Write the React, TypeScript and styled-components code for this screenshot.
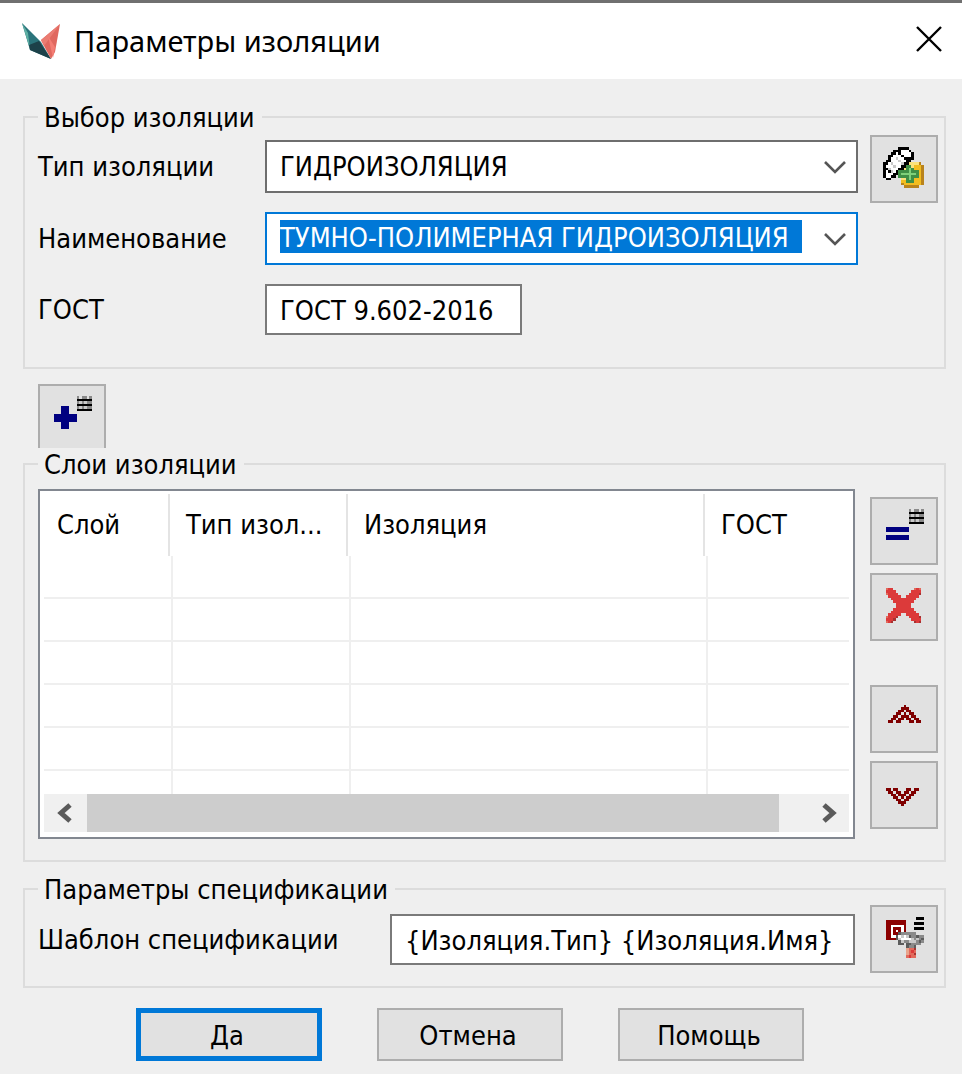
import React, { useState } from 'react';
import styled, { createGlobalStyle } from 'styled-components';

const GlobalStyle = createGlobalStyle`
  *, *::before, *::after { box-sizing: border-box; }
  body {
    margin: 0;
    background: #efefef;
    color: #000;
    font: 27px/32px "DejaVu Sans Condensed", "Noto Sans", sans-serif;
  }
  button, input, select { font: inherit; color: inherit; margin: 0; border-radius: 0; }
`;

const Dialog = styled.form`
  width: 100%;
  background: #efefef;
  border-top: 3px solid #707070;
  padding-bottom: 13px;
`;

const TitleBar = styled.header`
  display: flex;
  align-items: center;
  height: 76px;
  padding: 0 20px 0 22px;
  background: #fff;
`;

const Title = styled.h1`
  flex: 1;
  margin: 0 0 0 14px;
  font: 400 29px/40px "Noto Sans", sans-serif;
`;

const CloseButton = styled.button`
  display: flex;
  padding: 0;
  margin-bottom: 4px;
  border: 0;
  background: transparent;
`;

const Content = styled.main`
  display: flex;
  flex-direction: column;
  padding: 22px 16px 0 23px;
`;

const Group = styled.fieldset<{ $bottom: number }>`
  min-width: 0;
  margin: 0;
  padding: 0 6px ${p => p.$bottom}px 13px;
  border: 2px solid #dcdcdc;
`;

const Legend = styled.legend`
  position: relative;
  padding: 2px 7px 0 6px;
  line-height: 30px;
  background: #efefef;
`;

const Columns = styled.div<{ $gap: number; $top: number }>`
  display: flex;
  align-items: flex-start;
  gap: ${p => p.$gap}px;
  padding-top: ${p => p.$top}px;
`;

const Fields = styled.div<{ $top: number }>`
  flex: 1;
  min-width: 0;
  display: flex;
  flex-direction: column;
  gap: 19px;
  padding-top: ${p => p.$top}px;
`;

const FieldRow = styled.div<{ $label: number }>`
  display: grid;
  grid-template-columns: ${p => p.$label}px minmax(0, 1fr);
  align-items: center;
`;

const Label = styled.label`
  white-space: nowrap;
`;

const SelectBox = styled.div<{ $active?: boolean }>`
  position: relative;
  height: 53px;
  border: 2px solid ${p => (p.$active ? '#0078d7' : '#6e6e6e')};
  background: #fff;
`;

const Select = styled.select`
  appearance: none;
  display: block;
  width: 100%;
  height: 100%;
  padding: 0 56px 0 13px;
  border: 0;
  outline: 0;
  background: transparent;
`;

const ComboInput = styled.input`
  display: block;
  width: calc(100% - 67px);
  height: 33px;
  margin: 6px 0 0 13px;
  padding: 2px 0 0;
  border: 0;
  outline: 0;
  background: #0078d7;
  color: #fff;
`;

const Arrow = styled.svg`
  position: absolute;
  right: 10px;
  top: 19px;
  pointer-events: none;
`;

const TextInput = styled.input<{ $width?: number }>`
  width: ${p => (p.$width ? `${p.$width}px` : '100%')};
  height: 51px;
  padding: 1px 13px 0;
  border: 2px solid #7a7a7a;
  outline: 0;
  background: #fff;
`;

const ToolButton = styled.button`
  flex: none;
  display: flex;
  align-items: center;
  justify-content: center;
  width: 68px;
  height: 68px;
  padding: 0 2px 4px 0;
  border: 2px solid #adadad;
  background: #e1e1e1;
`;

const AddRow = styled.div`
  display: flex;
  margin: 15px 0 -4px;
  padding-left: 15px;
`;

const ToolColumn = styled.div`
  display: flex;
  flex-direction: column;
  gap: 44px;
  padding-top: 8px;
`;

const ToolPair = styled.div`
  display: flex;
  flex-direction: column;
  gap: 8px;
`;

const ListView = styled.div`
  flex: 1;
  min-width: 0;
  padding: 3px 4px 5px;
  border: 2px solid #828790;
  background: #fff;
`;

const TableClip = styled.div`
  height: 300px;
  overflow: hidden;
`;

const Table = styled.table`
  width: 100%;
  table-layout: fixed;
  border-collapse: separate;
  border-spacing: 0;
`;

const HeadCell = styled.th`
  height: 62px;
  padding: 0 15px 0 13px;
  font-weight: 400;
  text-align: left;
  white-space: nowrap;
  overflow: hidden;
  background: linear-gradient(#e4e4e4, #e4e4e4) right 3px top / 2px 100% no-repeat;
  &:last-child { background: none; }
`;

const Cell = styled.td`
  height: 43px;
  padding: 0;
  border: solid #efefef;
  border-width: 0 2px 2px 0;
  &:last-child { border-right: 0; }
`;

const ScrollBar = styled.div`
  display: flex;
  align-items: stretch;
  height: 38px;
  background: #f0f0f0;
`;

const ScrollButton = styled.button`
  display: flex;
  align-items: center;
  justify-content: center;
  width: 43px;
  padding: 0;
  border: 0;
  background: transparent;
`;

const Track = styled.div`
  flex: 1;
  padding-right: 27px;
`;

const Thumb = styled.div`
  height: 100%;
  background: #cdcdcd;
`;

const SpecSection = styled.section`
  padding-top: 11px;
`;

const Actions = styled.footer`
  display: flex;
  justify-content: center;
  gap: 55px;
  padding: 20px 22px 0 0;
`;

const ActionButton = styled.button<{ $primary?: boolean }>`
  width: 186px;
  height: 53px;
  padding: 2px 4px 0 0;
  border: ${p => (p.$primary ? '5px solid #0078d7' : '2px solid #adadad')};
  background: #e1e1e1;
`;

const palette: Record<string, string> = {
  k: '#000000', w: '#ffffff', n: '#000080', r: '#800000', g: '#8a8a8a', s: '#c9c9c9',
  d: '#5c5c5c', e: '#3f8f45', l: '#7fd07a', y: '#f2bd1f', Y: '#fbe27a', o: '#b9831c',
  R: '#dc3a3a', P: '#e26a5c', D: '#a63232', M: '#8c0000', O: '#e9a48c',
};

function PixelIcon({ rows }: { rows: string[] }) {
  return (
    <svg width="41" height="41" viewBox="0 0 16 16" shapeRendering="crispEdges" aria-hidden="true">
      {rows.flatMap((row, y) =>
        [...row].map((c, x) =>
          palette[c] ? (
            <rect key={`${x}-${y}`} x={x} y={y} width="1" height="1" fill={palette[c]} />
          ) : null
        )
      )}
    </svg>
  );
}

const insulationIcon = [
  '......kkkk......',
  '....kkkwwwk.....',
  '...kkwkwwwwk....',
  '..kkwwwkwwwk....',
  '..kwwswwkkkk....',
  '.kkwwwswwkk.....',
  'kkwswwwskkYYYYo.',
  'kwwwswwkkeeYyyyo',
  'kkswwwkkYeleyyyo',
  'kwkswkeeeeleeeyo',
  'kwwwkkelllllleyo',
  'kwwkk.eeeeleeeyo',
  '.kk....YYeleyyyo',
  '.......yyeeeyyyo',
  '.......oyyyyyyyo',
  '........oooooo..',
];

const addIcon = [
  '..........g.gg.g',
  '..........kkkkkk',
  '..........gsgsgg',
  '..........kkkkkk',
  '....nnn...gsgsgg',
  '....nnn...kkkkkk',
  '....nnn.........',
  '.nnnnnnnnn......',
  '.nnnnnnnnn......',
  '.nnnnnnnnn......',
  '....nnn.........',
  '....nnn.........',
  '....nnn.........',
];

const equalIcon = [
  '..........g.gg.g',
  '..........kkkkkk',
  '..........gsgsgg',
  '..........kkkkkk',
  '..........gsgsgg',
  '..........kkkkkk',
  '................',
  '.nnnnnnnnn......',
  '.nnnnnnnnn......',
  '................',
  '.nnnnnnnnn......',
  '.nnnnnnnnn......',
];

const deleteIcon = [
  '................',
  '.PRR........PRP.',
  '.RRRR......RRRR.',
  '.PRRRR....RRRRD.',
  '..RRRRR..RRRRR..',
  '...RRRRRRRRRR...',
  '....RRRRRRRR....',
  '.....RRRRRR.....',
  '.....RRRRRR.....',
  '....RRRRRRRR....',
  '...RRRRRRRRRR...',
  '..RRRRR..RRRRR..',
  '.PRRRD....RRRRD.',
  '.RRRD......RRRR.',
  '.PRD........DRD.',
];

const upIcon = [
  '', '', '',
  '........r.......',
  '.......rrr......',
  '......rr.rr.....',
  '.....rr.r.rr....',
  '....rr.rrr.rr...',
  '...rr.rr.rr.rr..',
  '..rr.rr...rr.rr.',
];

const downIcon = [
  '', '', '', '', '', '',
  '.rr.rr...rr.rr..',
  '..rr.rr.rr.rr...',
  '...rr.rrr.rr....',
  '....rr.r.rr.....',
  '.....rr.rr......',
  '......rrr.......',
  '.......r........',
];

const templateIcon = [
  '.............kkk',
  '.MMMMMMMM.......',
  '.MMMMMMMM...kkkk',
  '.MMwwwwwM.......',
  '.MMwMMMwM...kkkk',
  '.MMwMwMwM.......',
  '.MMwMMdgggggg...',
  '.MMwwdwswsdggdgg',
  '.MMMMdswwwwsgsgd',
  '......dsggsssgdg',
  '......dd.ddgggg.',
  '.........dggd...',
  '.........OPPD...',
  '.........OPRP...',
  '.........OPPD...',
  '.........PRPP...',
];

function Logo() {
  return (
    <svg width="38" height="38" viewBox="0 0 38 38" aria-hidden="true">
      <path d="M0 1 L19 20 L29 37 L8 28 Z" fill="#2a747b" />
      <path d="M0 1 L6 11 L8 27 Z" fill="#5fb0a4" />
      <path d="M17 19 L29 37 L8 28 L7 23 Z" fill="#1c4149" />
      <path d="M38 2 L19 18 L22 24 L29 37 L33 30 Z" fill="#e0685f" />
      <path d="M38 2 L19 18 L22 24 Z" fill="#ea7c72" />
      <path d="M26 14 L31 36 L33 25 Z" fill="#f47d74" />
    </svg>
  );
}

function ChevronDown() {
  return (
    <Arrow width="22" height="13" viewBox="0 0 22 13" fill="none" aria-hidden="true">
      <path d="M1 1 L11 11 L21 1" stroke="#555" strokeWidth="2.6" />
    </Arrow>
  );
}

function ScrollArrow({ d }: { d: string }) {
  return (
    <svg width="18" height="20" viewBox="0 0 18 20" fill="none" aria-hidden="true">
      <path d={d} stroke="#5a5a5a" strokeWidth="5" />
    </svg>
  );
}

const headers = ['Слой', 'Тип изол...', 'Изоляция', 'ГОСТ'];
const emptyRows = [0, 1, 2, 3, 4, 5];

export default function App() {
  const [name, setName] = useState('ТУМНО-ПОЛИМЕРНАЯ ГИДРОИЗОЛЯЦИЯ');
  const [gost, setGost] = useState('ГОСТ 9.602-2016');
  const [template, setTemplate] = useState('{Изоляция.Тип} {Изоляция.Имя}');

  return (
    <>
      <GlobalStyle />
      <Dialog onSubmit={e => e.preventDefault()}>
        <TitleBar>
          <Logo />
          <Title>Параметры изоляции</Title>
          <CloseButton type="button" aria-label="Закрыть">
            <svg width="26" height="26" viewBox="0 0 26 26" aria-hidden="true">
              <path d="M1 1 L25 25 M25 1 L1 25" stroke="#000" strokeWidth="2.4" />
            </svg>
          </CloseButton>
        </TitleBar>

        <Content>
          <Group $bottom={32}>
            <Legend>Выбор изоляции</Legend>
            <Columns $gap={12} $top={2}>
              <Fields $top={5}>
                <FieldRow $label={227}>
                  <Label htmlFor="type">Тип изоляции</Label>
                  <SelectBox>
                    <Select id="type">
                      <option>ГИДРОИЗОЛЯЦИЯ</option>
                    </Select>
                    <ChevronDown />
                  </SelectBox>
                </FieldRow>
                <FieldRow $label={227}>
                  <Label htmlFor="name">Наименование</Label>
                  <SelectBox $active>
                    <ComboInput id="name" role="combobox" aria-expanded={false} value={name} onChange={e => setName(e.target.value)} />
                    <ChevronDown />
                  </SelectBox>
                </FieldRow>
                <FieldRow $label={227}>
                  <Label htmlFor="gost">ГОСТ</Label>
                  <TextInput id="gost" $width={257} value={gost} onChange={e => setGost(e.target.value)} />
                </FieldRow>
              </Fields>
              <ToolButton type="button" aria-label="Добавить изоляцию">
                <PixelIcon rows={insulationIcon} />
              </ToolButton>
            </Columns>
          </Group>

          <AddRow>
            <ToolButton type="button" aria-label="Добавить слой">
              <PixelIcon rows={addIcon} />
            </ToolButton>
          </AddRow>

          <Group $bottom={21}>
            <Legend>Слои изоляции</Legend>
            <Columns $gap={15} $top={9}>
              <ListView>
                <TableClip>
                  <Table>
                    <colgroup>
                      <col width="129" />
                      <col width="178" />
                      <col width="357" />
                      <col />
                    </colgroup>
                    <thead>
                      <tr>
                        {headers.map(h => (
                          <HeadCell key={h} scope="col">{h}</HeadCell>
                        ))}
                      </tr>
                    </thead>
                    <tbody>
                      {emptyRows.map(r => (
                        <tr key={r}>
                          {headers.map(h => (
                            <Cell key={h} />
                          ))}
                        </tr>
                      ))}
                    </tbody>
                  </Table>
                </TableClip>
                <ScrollBar>
                  <ScrollButton type="button" aria-label="Прокрутить влево">
                    <ScrollArrow d="M13 2 L4 10 L13 18" />
                  </ScrollButton>
                  <Track>
                    <Thumb />
                  </Track>
                  <ScrollButton type="button" aria-label="Прокрутить вправо">
                    <ScrollArrow d="M5 2 L14 10 L5 18" />
                  </ScrollButton>
                </ScrollBar>
              </ListView>
              <ToolColumn>
                <ToolPair>
                  <ToolButton type="button" aria-label="Изменить слой">
                    <PixelIcon rows={equalIcon} />
                  </ToolButton>
                  <ToolButton type="button" aria-label="Удалить слой">
                    <PixelIcon rows={deleteIcon} />
                  </ToolButton>
                </ToolPair>
                <ToolPair>
                  <ToolButton type="button" aria-label="Переместить вверх">
                    <PixelIcon rows={upIcon} />
                  </ToolButton>
                  <ToolButton type="button" aria-label="Переместить вниз">
                    <PixelIcon rows={downIcon} />
                  </ToolButton>
                </ToolPair>
              </ToolColumn>
            </Columns>
          </Group>

          <SpecSection>
            <Group $bottom={13}>
              <Legend>Параметры спецификации</Legend>
              <Columns $gap={15} $top={0}>
                <Fields $top={9}>
                  <FieldRow $label={352}>
                    <Label htmlFor="template">Шаблон спецификации</Label>
                    <TextInput id="template" value={template} onChange={e => setTemplate(e.target.value)} />
                  </FieldRow>
                </Fields>
                <ToolButton type="button" aria-label="Настроить шаблон">
                  <PixelIcon rows={templateIcon} />
                </ToolButton>
              </Columns>
            </Group>
          </SpecSection>
        </Content>

        <Actions>
          <ActionButton type="submit" $primary>Да</ActionButton>
          <ActionButton type="button">Отмена</ActionButton>
          <ActionButton type="button">Помощь</ActionButton>
        </Actions>
      </Dialog>
    </>
  );
}
